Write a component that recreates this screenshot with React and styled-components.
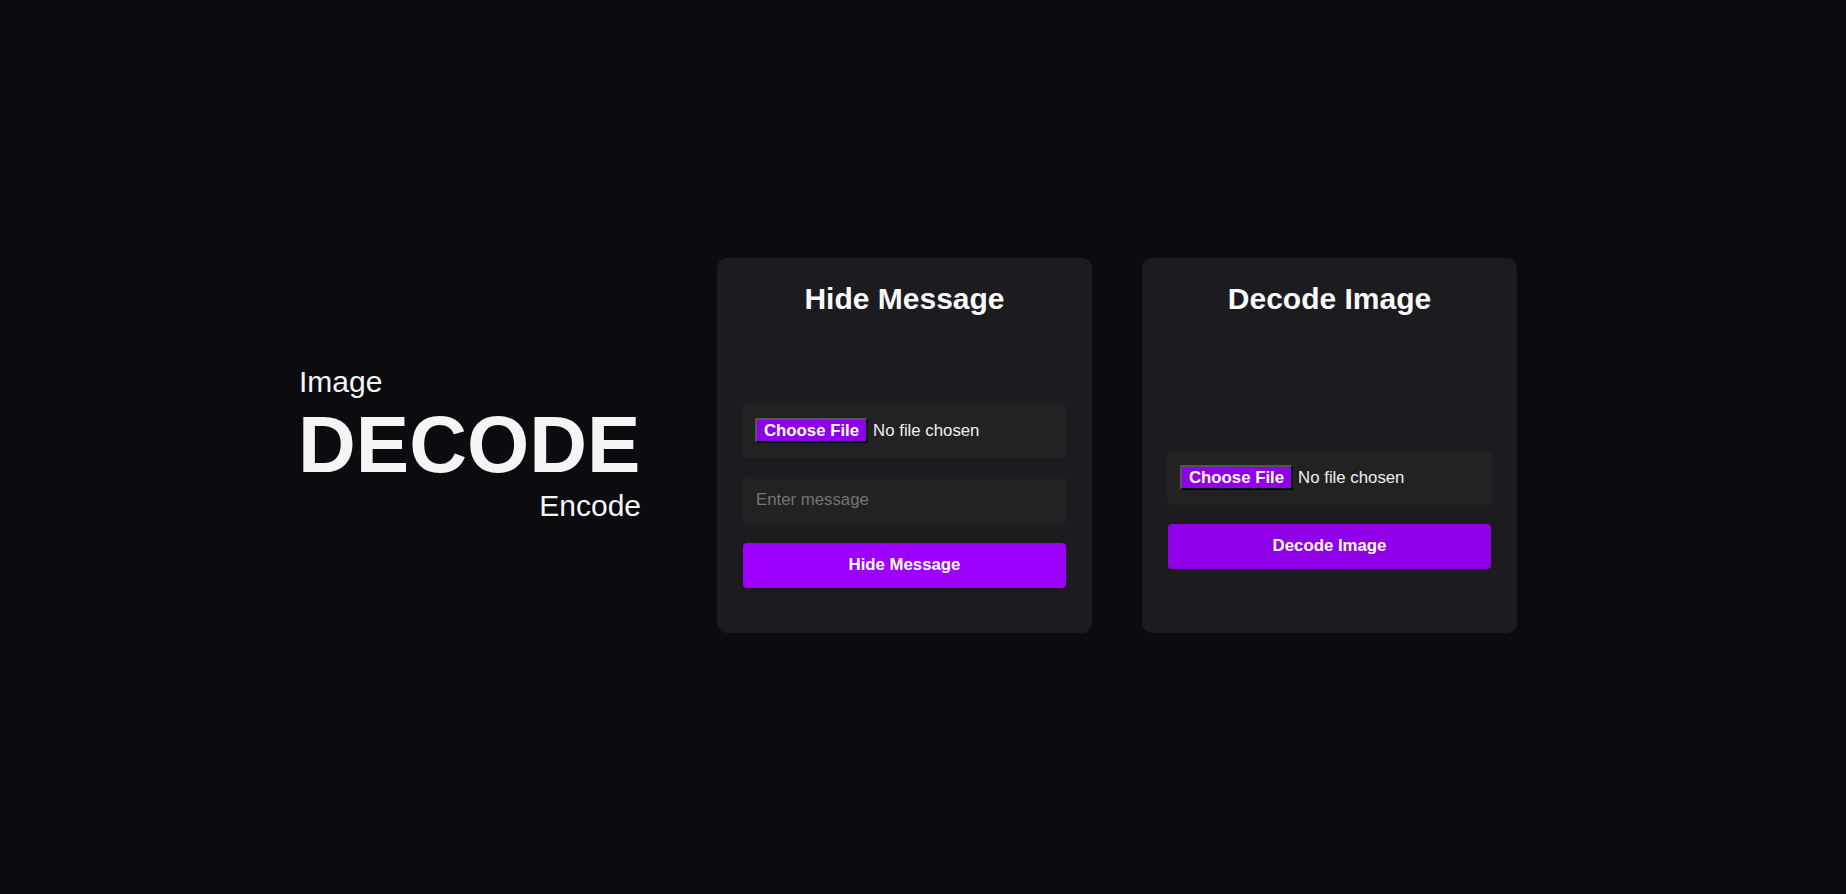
import React from 'react'
import styled, { createGlobalStyle } from 'styled-components'

const GlobalStyle = createGlobalStyle`
    * {
        box-sizing: border-box;
    }

    body {
        margin: 0;
        background: #0c0b10;
        color: #f5f5f5;
        font-family: "Liberation Sans", Arial, sans-serif;
    }
`

const App = () => {
    return (
        <>
            <GlobalStyle />
            <Page>
                <Row>
                    <Brand>
                        <BrandSmall>Image</BrandSmall>
                        <BrandBig>DECODE</BrandBig>
                        <BrandSmall right>Encode</BrandSmall>
                    </Brand>

                    <Card>
                        <CardTitle>Hide Message</CardTitle>
                        <Form offset={87}>
                            <FileBox>
                                <FileInput type="file" />
                            </FileBox>
                            <TextInput type="text" placeholder="Enter message" />
                            <ActionButton>Hide Message</ActionButton>
                        </Form>
                    </Card>

                    <Card>
                        <CardTitle>Decode Image</CardTitle>
                        <Form offset={134}>
                            <FileBox>
                                <FileInput type="file" />
                            </FileBox>
                            <ActionButton dim>Decode Image</ActionButton>
                        </Form>
                    </Card>
                </Row>
            </Page>
        </>
    )
}

export default App


const Page = styled.div`
    min-height: 100vh;
    padding-bottom: 3px;
    display: flex;
    align-items: center;
    justify-content: center;
`

const Row = styled.div`
    display: flex;
    align-items: center;
    gap: 50px;
    padding-right: 28px;
`

const Brand = styled.div`
    width: 340px;
    margin-right: 26px;
    margin-bottom: 3px;
    display: flex;
    flex-direction: column;
    color: #f5f5f5;
`

const BrandSmall = styled.span`
    font-size: 30px;
    line-height: 1.15;
    margin-top: ${({ right }) => (right ? '-2px' : '0')};
    margin-left: ${({ right }) => (right ? '0' : '-2px')};
    align-self: ${({ right }) => (right ? 'flex-end' : 'flex-start')};
`

const BrandBig = styled.span`
    font-size: 80px;
    font-weight: bold;
    line-height: 1.15;
    margin-left: -3px;
`

const Card = styled.div`
    width: 375px;
    height: 375px;
    background: #1c1b20;
    border-radius: 10px;
    padding: 24px 25px;
    display: flex;
    flex-direction: column;
`

const CardTitle = styled.h2`
    margin: 0;
    font-size: 30px;
    font-weight: bold;
    text-align: center;
    color: #fafafa;
    line-height: 1.15;
`

const Form = styled.div`
    margin-top: ${({ offset }) => offset}px;
    display: flex;
    flex-direction: column;
    gap: 19px;
`

const FileBox = styled.div`
    height: 54px;
    padding: 0 13px;
    display: flex;
    align-items: center;
    background: #222222;
    border-radius: 6px;
`

const FileInput = styled.input`
    font: inherit;
    font-size: 16.8px;
    color: #f0f0f0;

    &::file-selector-button {
        font: inherit;
        font-weight: bold;
        color: #ffffff;
        background: #8f00e8;
        padding: 1px 7px;
        margin-right: 5px;
        height: 25px;
    }
`

const TextInput = styled.input`
    height: 47px;
    padding: 0 14px;
    background: #222222;
    border: none;
    border-radius: 6px;
    font-family: inherit;
    font-size: 16.8px;
    color: #f0f0f0;
    outline: none;

    &::placeholder {
        color: #757575;
    }
`

const ActionButton = styled.button`
    height: 45px;
    margin: 0 1px;
    border: none;
    border-radius: 4px;
    background: ${({ dim }) => (dim ? '#8f00e8' : '#9d00ff')};
    color: #ffffff;
    font-family: inherit;
    font-size: 16.8px;
    font-weight: bold;
    cursor: pointer;
`
